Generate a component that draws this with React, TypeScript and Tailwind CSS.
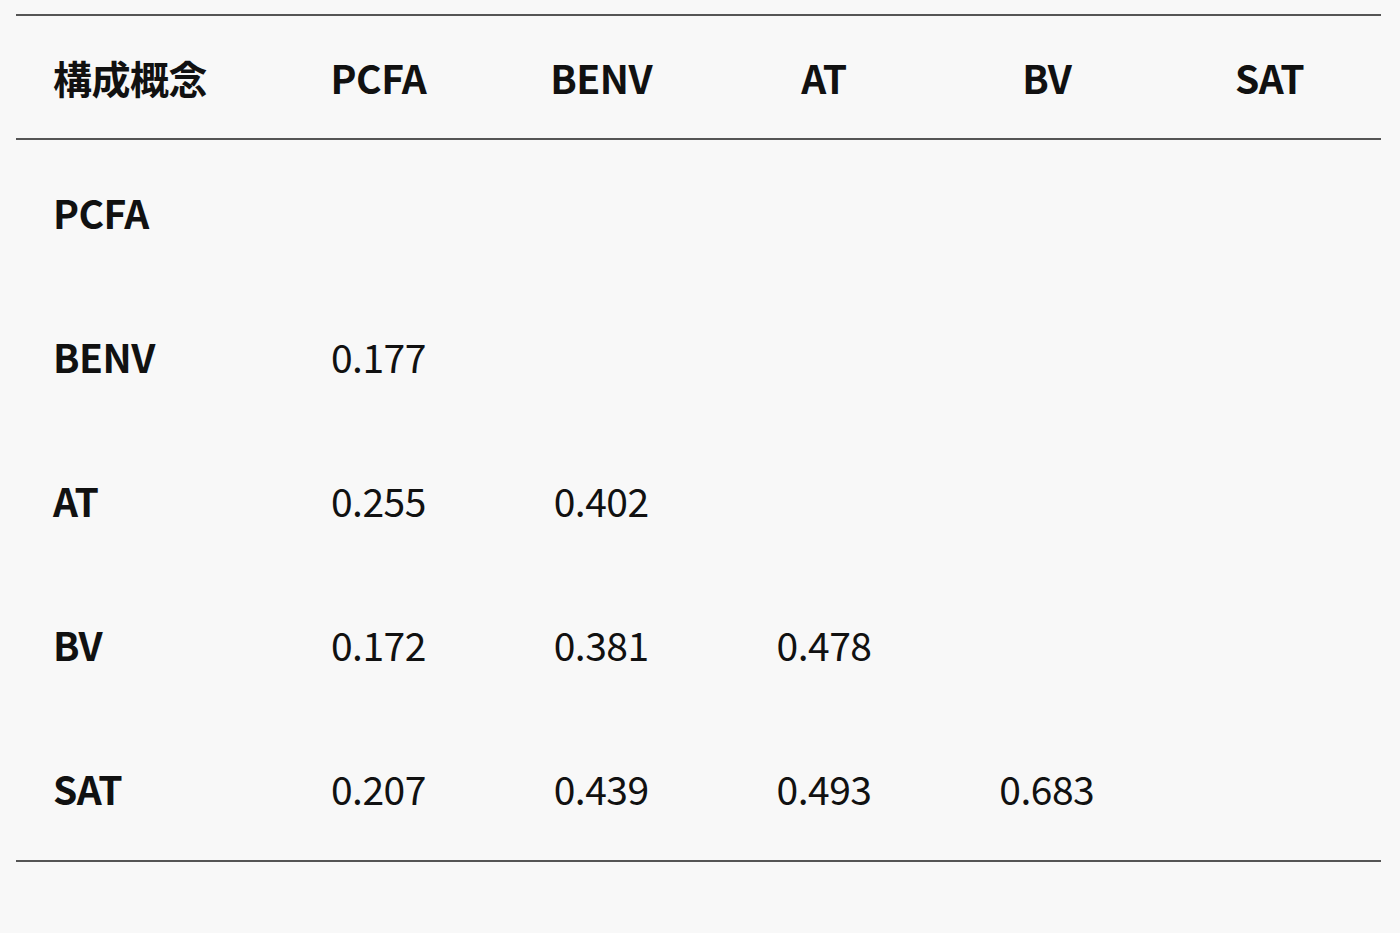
import React from "react";

const cols = ["PCFA", "BENV", "AT", "BV", "SAT"];
const rows: { label: string; values: string[] }[] = [
  { label: "PCFA", values: [] },
  { label: "BENV", values: ["0.177"] },
  { label: "AT", values: ["0.255", "0.402"] },
  { label: "BV", values: ["0.172", "0.381", "0.478"] },
  { label: "SAT", values: ["0.207", "0.439", "0.493", "0.683"] },
];

export default function App() {
  return (
    <div
      className="min-h-screen w-full bg-[#f8f8f8] text-[#111111] pt-[14px] pl-[16px]"
      style={{ fontFamily: '"Noto Sans CJK JP", "Noto Sans", sans-serif' }}
    >
      <div className="w-[1365px]">
        <div className="grid grid-cols-[251px_repeat(5,1fr)] h-[126px] items-center border-t-2 border-b-2 border-[#555555] text-[39px] tracking-[-0.5px] font-bold">
          <div className="pl-[37px]">構成概念</div>
          {cols.map((c) => (
            <div key={c} className="text-center">
              {c}
            </div>
          ))}
        </div>
        <div className="border-b-2 border-[#555555]">
          {rows.map((r) => (
            <div
              key={r.label}
              className="grid grid-cols-[251px_repeat(5,1fr)] h-[144px] items-center text-[39px] tracking-[-0.5px]"
            >
              <div className="pl-[37px] font-bold">{r.label}</div>
              {cols.map((c, i) => (
                <div key={c} className="text-center font-normal">
                  {r.values[i] ?? ""}
                </div>
              ))}
            </div>
          ))}
        </div>
      </div>
    </div>
  );
}
